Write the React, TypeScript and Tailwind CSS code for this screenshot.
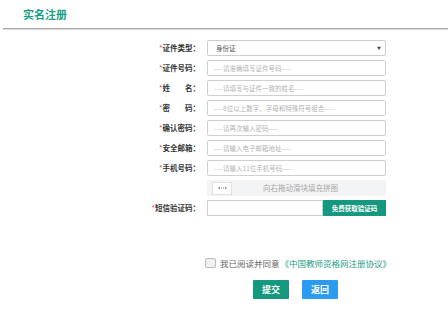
import { ReactNode } from 'react';

const font = { fontFamily: '"Noto Sans CJK SC", "Noto Sans", sans-serif' };

function Row({ label, star = true, children }: { label: ReactNode; star?: boolean; children: ReactNode }) {
  return (
    <div className="flex items-center h-4">
      <div className="w-[63px] pr-[3px] text-right text-[7.5px] font-bold text-[#333] leading-none whitespace-nowrap">
        {star && <span className="text-[#e53935] font-normal">*</span>}
        {label}：
      </div>
      <div className="ml-[4px] w-[179px] h-4">{children}</div>
    </div>
  );
}

function TextInput({ placeholder }: { placeholder: string }) {
  return (
    <div className="h-4 border border-[#cfcfcf] rounded-[2px] bg-white flex items-center pl-[6px] text-[6.5px] text-[#b3b3b3] leading-none whitespace-nowrap overflow-hidden">
      {placeholder}
    </div>
  );
}

export default function App() {
  const fields = [
    { label: '证件号码', ph: '----请准确填写证件号码----' },
    { label: <>姓<span className="inline-block w-[15px]" />名</>, ph: '----请填写与证件一致的姓名----' },
    { label: <>密<span className="inline-block w-[15px]" />码</>, ph: '----8位以上数字、字母和特殊符号组合----' },
    { label: '确认密码', ph: '----请再次输入密码----' },
    { label: '安全邮箱', ph: '----请输入电子邮箱地址----' },
    { label: '手机号码', ph: '----请输入11位手机号码----' },
  ];

  return (
    <div className="w-[448px] h-[310px] bg-white overflow-hidden" style={font}>
      <div className="h-[28px] flex items-center pl-[23px]">
        <span className="text-[11px] font-bold text-[#1a9e86] leading-none">实名注册</span>
      </div>
      <div className="ml-[3px] h-[2px] bg-[#ababab] border-b border-[#d8d8d8]" />

      <div className="pl-[140px] pt-[10px] flex flex-col gap-[4px]">
        <Row label="证件类型">
          <div className="h-4 border border-[#cfcfcf] rounded-[2px] bg-white flex items-center justify-between pl-[8px] pr-[4px] text-[6.5px] text-[#555] leading-none">
            <span>身份证</span>
            <span className="text-[4px] text-[#444]">▼</span>
          </div>
        </Row>
        {fields.map((f, i) => (
          <Row key={i} label={f.label}>
            <TextInput placeholder={f.ph} />
          </Row>
        ))}
        <div className="flex items-center h-4">
          <div className="w-[63px]" />
          <div className="ml-[4px] w-[179px] h-4 bg-[#f3f4f5] flex items-center">
            <div className="ml-[5px] w-[20px] h-[13px] shrink-0 bg-white border border-[#e2e2e2] flex items-center justify-center">
              <svg width="9" height="4" viewBox="0 0 9 4">
                <path d="M0 2 L2 0.5 L2 3.5 Z M9 2 L7 0.5 L7 3.5 Z" fill="#888" />
                <rect x="3" y="1.5" width="1" height="1" fill="#888" />
                <rect x="5" y="1.5" width="1" height="1" fill="#888" />
              </svg>
            </div>
            <span className="ml-[31px] text-[7.5px] text-[#a8a8a8] leading-none whitespace-nowrap">向右拖动滑块填充拼图</span>
          </div>
        </div>
        <Row label="短信验证码">
          <div className="flex h-4">
            <div className="w-[116px] h-4 border border-[#cfcfcf] bg-white" />
            <div className="flex-1 h-4 bg-[#14987f] text-white text-[6.5px] font-bold flex items-center justify-center leading-none whitespace-nowrap">
              免费获取验证码
            </div>
          </div>
        </Row>
      </div>

      <div className="mt-[42px] pl-[205px] flex items-center h-[10px]">
        <div className="w-[11px] h-[10px] border border-[#bdbdbd] rounded-[2px] bg-[#f0f0f0]" />
        <span className="ml-[4px] text-[8.5px] text-[#666] leading-none whitespace-nowrap">我已阅读并同意</span>
        <span className="ml-[1px] text-[8.5px] text-[#1a9e86] leading-none whitespace-nowrap">《中国教师资格网注册协议》</span>
      </div>

      <div className="mt-[12px] pl-[253px] flex gap-[13px]">
        <div className="w-[36px] h-[19px] bg-[#14987f] text-white text-[9px] font-bold flex items-center justify-center rounded-[1px] leading-none">提交</div>
        <div className="w-[36px] h-[19px] bg-[#2a9bf0] text-white text-[9px] font-bold flex items-center justify-center rounded-[1px] leading-none">返回</div>
      </div>
    </div>
  );
}
